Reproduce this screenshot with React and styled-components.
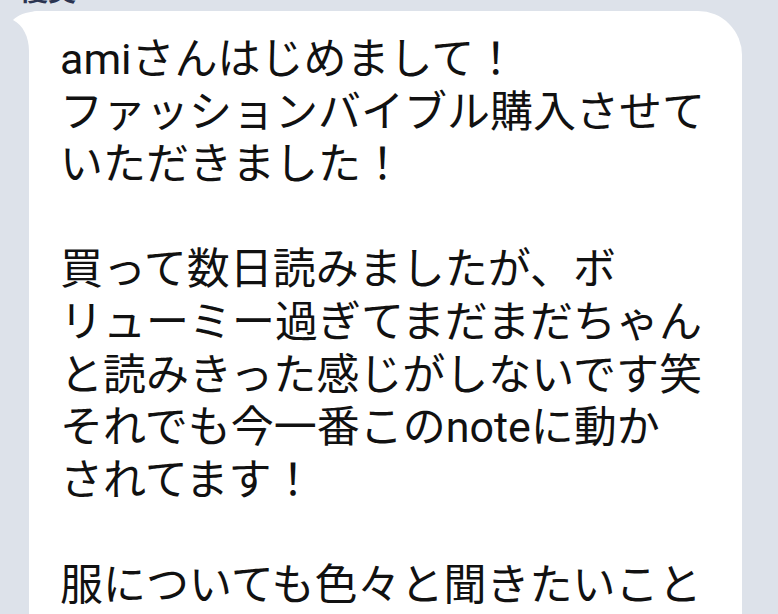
import React from 'react';
import styled, { createGlobalStyle } from 'styled-components';

const GlobalStyle = createGlobalStyle`
  html, body {
    margin: 0;
    padding: 0;
    background: #dde2ea;
    overflow: hidden;
  }
`;

const Screen = styled.div`
  width: 778px;
  height: 614px;
  overflow: hidden;
  display: flex;
  flex-direction: column;
  font-family: "Roboto", "Noto Sans CJK JP", sans-serif;
`;

const NameClip = styled.div`
  flex-shrink: 0;
  height: 6px;
  overflow: hidden;
  display: flex;
  align-items: flex-end;
  padding-left: 20px;
`;

const Name = styled.span`
  display: block;
  font-size: 28px;
  font-weight: 700;
  line-height: 28px;
  color: #2b3451;
`;

const MessageRow = styled.div`
  flex-shrink: 0;
  margin-top: 5px;
  padding-left: 29px;
  display: flex;
`;

const Bubble = styled.div`
  position: relative;
  width: 713px;
  min-height: 700px;
  box-sizing: border-box;
  background: #ffffff;
  border-radius: 8px 44px 44px 44px;
  padding: 22px 0 0 31px;
`;

const Tail = styled.svg`
  position: absolute;
  left: -17px;
  top: 0;
  z-index: 1;
  display: block;
  overflow: visible;
`;

const Line = styled.div`
  font-size: 43px;
  line-height: 52.6px;
  height: 52.6px;
  color: #111111;
  white-space: nowrap;
`;

const lines = [
  'amiさんはじめまして！',
  'ファッションバイブル購入させて',
  'いただきました！',
  '',
  '買って数日読みましたが、ボ',
  'リューミー過ぎてまだまだちゃん',
  'と読みきった感じがしないです笑',
  'それでも今一番このnoteに動か',
  'されてます！',
  '',
  '服についても色々と聞きたいこと',
];

const App = () => {
  return (
    <Screen>
      <GlobalStyle />
      <NameClip>
        <Name>優美</Name>
      </NameClip>
      <MessageRow>
        <Bubble>
          <Tail width="26" height="40" viewBox="0 0 26 40">
            <path d="M1 9 C6 4 13 1 26 0 L26 40 L17 40 C17 26 11 14 1 9 Z" fill="#ffffff" />
          </Tail>
          {lines.map((text, i) => (
            <Line key={i}>{text}</Line>
          ))}
        </Bubble>
      </MessageRow>
    </Screen>
  );
};

export default App;
